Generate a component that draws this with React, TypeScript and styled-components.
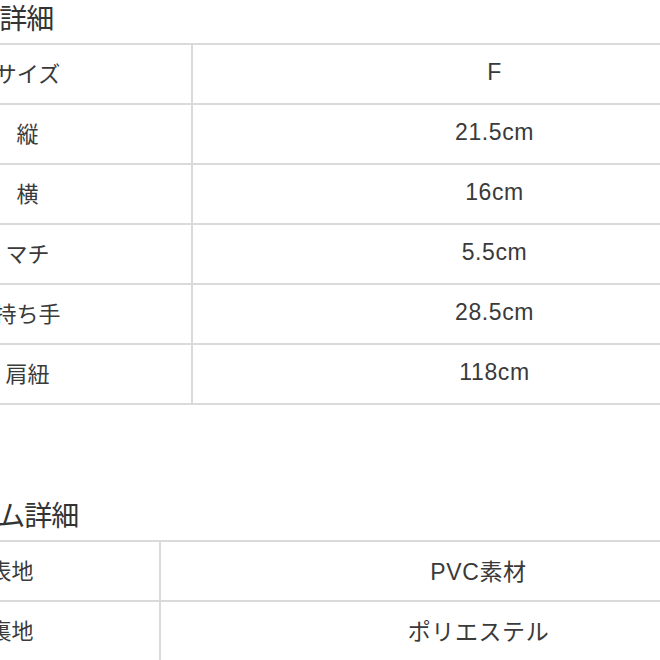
import React from 'react';
import styled, { createGlobalStyle } from 'styled-components';

const GlobalStyle = createGlobalStyle`
  html, body {
    margin: 0;
    padding: 0;
    background: #fff;
    overflow: hidden;
  }
  body {
    font-family: "Liberation Sans", "Noto Sans CJK JP", sans-serif;
    color: #3a3a3a;
  }
`;

const Page = styled.div`
  width: 660px;
  height: 660px;
  overflow: hidden;
`;

// the shot is cropped on the left, so the sheet starts off-screen
const Sheet = styled.div`
  width: 936px;
  margin-left: -138px;
  padding-top: 6px;
`;

const Section = styled.section<{ $gap?: number }>`
  margin-top: ${({ $gap }) => $gap ?? 0}px;
`;

const Title = styled.h2`
  margin: 0 0 9px 57px;
  font-size: 28px;
  line-height: 28px;
  font-weight: 400;
  color: #333;
  letter-spacing: -1px;
`;

const Table = styled.table`
  width: 100%;
  border-collapse: collapse;
  table-layout: fixed;
`;

const Label = styled.th<{ $width: number }>`
  width: ${({ $width }) => $width}px;
  height: 53px;
  padding: 0 0 5px;
  border: 2px solid #dadada;
  font-size: 22px;
  font-weight: 400;
  text-align: center;
  color: #3a3a3a;
`;

const Value = styled.td`
  height: 55px;
  padding: 0 0 3px;
  border: 2px solid #dadada;
  font-size: 23px;
  letter-spacing: 0.6px;
  text-align: center;
  color: #3a3a3a;
`;

type Row = [string, string];

const sizeRows: Row[] = [
  ['サイズ', 'F'],
  ['縦', '21.5cm'],
  ['横', '16cm'],
  ['マチ', '5.5cm'],
  ['持ち手', '28.5cm'],
  ['肩紐', '118cm'],
];

const itemRows: Row[] = [
  ['表地', 'PVC素材'],
  ['裏地', 'ポリエステル'],
  ['', ''],
];

const DetailTable = ({ rows, labelWidth }: { rows: Row[]; labelWidth: number }) => (
  <Table>
    <tbody>
      {rows.map(([label, value], i) => (
        <tr key={i}>
          <Label $width={labelWidth}>{label}</Label>
          <Value>{value}</Value>
        </tr>
      ))}
    </tbody>
  </Table>
);

export default function App() {
  return (
    <Page>
      <GlobalStyle />
      <Sheet>
        <Section>
          <Title>サイズ詳細</Title>
          <DetailTable rows={sizeRows} labelWidth={327} />
        </Section>
        <Section $gap={98}>
          <Title>アイテム詳細</Title>
          <DetailTable rows={itemRows} labelWidth={295} />
        </Section>
      </Sheet>
    </Page>
  );
}
